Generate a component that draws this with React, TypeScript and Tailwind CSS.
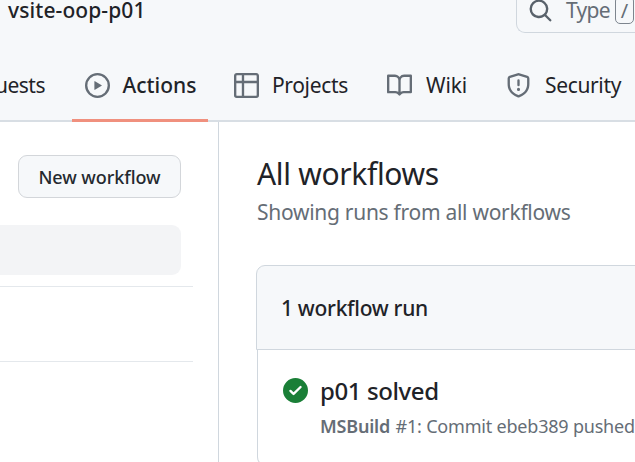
import type { ReactNode } from "react";

const paths = {
  play: "M8 0a8 8 0 1 1 0 16A8 8 0 0 1 8 0ZM1.5 8a6.5 6.5 0 1 0 13 0 6.5 6.5 0 0 0-13 0Zm4.879-2.773 4.264 2.559a.25.25 0 0 1 0 .428l-4.264 2.559A.25.25 0 0 1 6 10.559V5.442a.25.25 0 0 1 .379-.215Z",
  table:
    "M0 1.75C0 .784.784 0 1.75 0h12.5C15.216 0 16 .784 16 1.75v12.5A1.75 1.75 0 0 1 14.25 16H1.75A1.75 1.75 0 0 1 0 14.25ZM6.5 6.5v8h7.75a.25.25 0 0 0 .25-.25V6.5Zm8-1.5V1.75a.25.25 0 0 0-.25-.25H6.5V5Zm-13 1.5v7.75c0 .138.112.25.25.25H5v-8ZM5 5V1.5H1.75a.25.25 0 0 0-.25.25V5Z",
  book: "M0 1.75A.75.75 0 0 1 .75 1h4.253c1.227 0 2.317.59 3 1.501A3.743 3.743 0 0 1 11.006 1h4.245a.75.75 0 0 1 .75.75v10.5a.75.75 0 0 1-.75.75h-4.507a2.25 2.25 0 0 0-1.591.659l-.622.621a.75.75 0 0 1-1.06 0l-.622-.621A2.25 2.25 0 0 0 5.258 13H.75a.75.75 0 0 1-.75-.75Zm7.251 10.324.004-5.073-.002-2.253A2.25 2.25 0 0 0 5.003 2.5H1.5v9h3.757a3.75 3.75 0 0 1 1.994.574ZM8.755 4.75l-.004 7.322a3.752 3.752 0 0 1 1.992-.572H14.5v-9h-3.495a2.25 2.25 0 0 0-2.25 2.25Z",
  shield:
    "M7.467.133a1.748 1.748 0 0 1 1.066 0l5.25 1.68A1.75 1.75 0 0 1 15 3.48V7c0 1.566-.32 3.182-1.303 4.682-.983 1.498-2.585 2.813-5.032 3.855a1.697 1.697 0 0 1-1.33 0c-2.447-1.042-4.049-2.357-5.032-3.855C1.32 10.182 1 8.566 1 7V3.48a1.75 1.75 0 0 1 1.217-1.667Zm.61 1.429a.25.25 0 0 0-.153 0l-5.25 1.68a.25.25 0 0 0-.174.238V7c0 1.358.275 2.666 1.057 3.86.784 1.194 2.121 2.34 4.366 3.297a.196.196 0 0 0 .154 0c2.245-.956 3.582-2.104 4.366-3.298C13.225 9.666 13.5 8.36 13.5 7V3.48a.251.251 0 0 0-.174-.237l-5.25-1.68ZM8.75 4.75v3a.75.75 0 0 1-1.5 0v-3a.75.75 0 0 1 1.5 0ZM9 10.5a1 1 0 1 1-2 0 1 1 0 0 1 2 0Z",
  search:
    "M10.68 11.74a6 6 0 0 1-7.922-8.982 6 6 0 0 1 8.982 7.922l3.04 3.04a.749.749 0 0 1-.326 1.275.749.749 0 0 1-.734-.215ZM11.5 7a4.499 4.499 0 1 0-8.997 0A4.499 4.499 0 0 0 11.5 7Z",
  check:
    "M8 16A8 8 0 1 1 8 0a8 8 0 0 1 0 16Zm3.78-9.72a.751.751 0 0 0-.018-1.042.751.751 0 0 0-1.042-.018L6.75 9.19 5.28 7.72a.751.751 0 0 0-1.042.018.751.751 0 0 0-.018 1.042l2 2a.75.75 0 0 0 1.06 0Z",
};

function Icon({ name, className = "text-[#656d76]" }: { name: keyof typeof paths; className?: string }) {
  return (
    <svg viewBox="0 0 16 16" fill="currentColor" className={`size-[25px] shrink-0 ${className}`}>
      <path d={paths[name]} />
    </svg>
  );
}

function Tab({ className, icon, children }: { className: string; icon: keyof typeof paths; children: ReactNode }) {
  return (
    <a className={`flex shrink-0 items-center whitespace-nowrap ${className}`}>
      <Icon name={icon} />
      <span className="pt-0.5">{children}</span>
    </a>
  );
}

function Header() {
  return (
    <header className="flex h-[122px] flex-col border-b-2 border-[#d8dee4] bg-[#f6f8fa]">
      <div className="flex h-[33px] items-start justify-between">
        <span className="pl-2 text-[21px] leading-5 font-medium tracking-[0.1px]">vsite-oop-p01</span>
        <div className="flex h-[33px] w-[119px] items-start overflow-hidden rounded-bl-[9px] border-b border-l border-[#d0d7de] pl-[11px] text-[#656d76]">
          <Icon name="search" className="-mt-[2.5px] text-[#59626b]" />
          <span className="ml-[13px] w-[49px] shrink-0 text-[21px] leading-5 tracking-[-0.7px]">Type</span>
          <kbd className="-mt-1 flex h-7 w-[19px] shrink-0 items-center justify-center rounded-[5px] border border-[#7d858e] font-['Noto_Sans',sans-serif] text-[20px] leading-none">
            <span className="pt-0.5">/</span>
          </kbd>
        </div>
      </div>
      <nav className="flex h-[89px] shrink-0 items-stretch pt-[15px] text-[21px]">
        <a className="flex w-[72px] shrink-0 items-center justify-end pt-0.5 pr-[27px] tracking-[-0.5px]">uests</a>
        <Tab icon="play" className="w-[136px] gap-[12.5px] border-b-[3px] border-[#f0907e] pt-[3px] pl-[13px] font-medium">
          Actions
        </Tab>
        <Tab icon="table" className="ml-[26px] w-[153px] gap-[13px] tracking-[-0.35px]">Projects</Tab>
        <Tab icon="book" className="w-[119px] gap-3.5 tracking-[-0.1px]">Wiki</Tab>
        <Tab icon="shield" className="gap-3.5 tracking-[-0.35px]">Security</Tab>
      </nav>
    </header>
  );
}

function Sidebar() {
  return (
    <aside className="w-[219px] shrink-0 border-r border-[#d0d7de] pt-[33px]">
      <button className="ml-[18px] flex h-[43px] w-[163px] items-center justify-center rounded-[9px] border border-[#d3d6da] bg-[#f6f8fa] pt-0.5 text-[18px] font-medium tracking-[-0.05px] text-[#24292f]">
        New workflow
      </button>
      <div className="mt-[27px] h-[50px] w-[181px] rounded-r-[9px] bg-[#f3f4f6]" />
      <div className="mt-[11px] h-[76px] w-[193px] border-y border-[#e4e8ec]" />
    </aside>
  );
}

export default function App() {
  return (
    <div className="flex h-[462px] w-[635px] flex-col overflow-hidden bg-white font-['Noto_Sans','Open_Sans',sans-serif] text-[#1f2328]">
      <Header />
      <div className="flex h-[340px] shrink-0">
        <Sidebar />
        <main className="min-w-0 flex-1 overflow-hidden pt-8 pl-[37px] whitespace-nowrap">
          <h1 className="pl-px text-[30px] leading-10 tracking-[-0.33px]">All workflows</h1>
          <p className="pl-px text-[21px] leading-9 tracking-[-0.28px] text-[#656d76]">Showing runs from all workflows</p>
          <section className="mt-[35px] w-[400px]">
            <h2 className="flex h-[85px] items-center rounded-tl-[9px] border border-[#d0d7de] bg-[#f6f8fa] pt-0.5 pl-6 text-[21px] font-medium tracking-[-0.3px]">
              1 workflow run
            </h2>
            <div className="ml-px flex h-[116px] gap-3 rounded-bl-[9px] border-b border-l border-[#d0d7de] pt-[25px] pl-[25px]">
              <Icon name="check" className="mt-[3px] text-[#1a7f37]" />
              <div>
                <h3 className="text-[24px] leading-8 font-medium tracking-[-0.4px]">p01 solved</h3>
                <p className="mt-[3px] text-[18px] leading-8 tracking-[-0.2px] text-[#656d76]">
                  <b className="mr-px font-semibold">MSBuild</b> #1: Commit ebeb389 pushed
                </p>
              </div>
            </div>
          </section>
        </main>
      </div>
    </div>
  );
}
